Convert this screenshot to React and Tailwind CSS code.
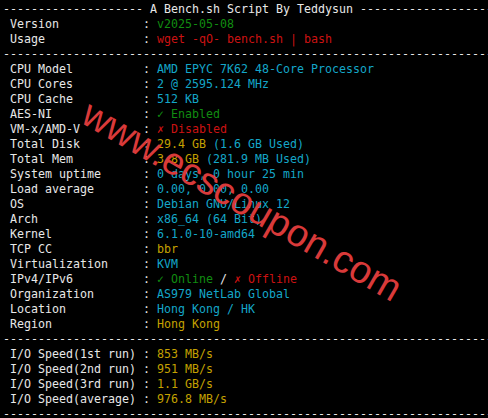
import React from "react";

const C = {
  w: "text-[#e8e8e8]",
  c: "text-[#14a6c8]",
  g: "text-[#118c11]",
  r: "text-[#cc1212]",
  y: "text-[#c4a000]",
};

const DASH = "-".repeat(72);

function Row({ label, parts }) {
  return (
    <div className="h-[15px] whitespace-pre">
      <span className={C.w}>{" " + label.padEnd(19) + ": "}</span>
      {parts.map((p, i) => (
        <span key={i} className={C[p[0]]}>
          {p[1]}
        </span>
      ))}
    </div>
  );
}

function Dash() {
  return <div className={"h-[15px] whitespace-pre " + C.w}>{DASH}</div>;
}

const rows1 = [
  ["CPU Model", [["c", "AMD EPYC 7K62 48-Core Processor"]]],
  ["CPU Cores", [["c", "2 @ 2595.124 MHz"]]],
  ["CPU Cache", [["c", "512 KB"]]],
  ["AES-NI", [["g", "\u2713 Enabled"]]],
  ["VM-x/AMD-V", [["r", "\u2717 Disabled"]]],
  ["Total Disk", [["y", "29.4 GB"], ["c", " (1.6 GB Used)"]]],
  ["Total Mem", [["y", "3.8 GB"], ["c", " (281.9 MB Used)"]]],
  ["System uptime", [["c", "0 days, 0 hour 25 min"]]],
  ["Load average", [["c", "0.00, 0.00, 0.00"]]],
  ["OS", [["c", "Debian GNU/Linux 12"]]],
  ["Arch", [["c", "x86_64 (64 Bit)"]]],
  ["Kernel", [["c", "6.1.0-10-amd64"]]],
  ["TCP CC", [["y", "bbr"]]],
  ["Virtualization", [["c", "KVM"]]],
  ["IPv4/IPv6", [["g", "\u2713 Online"], ["w", " / "], ["r", "\u2717 Offline"]]],
  ["Organization", [["c", "AS979 NetLab Global"]]],
  ["Location", [["c", "Hong Kong / HK"]]],
  ["Region", [["y", "Hong Kong"]]],
];

const rows2 = [
  ["I/O Speed(1st run)", [["y", "853 MB/s"]]],
  ["I/O Speed(2nd run)", [["y", "951 MB/s"]]],
  ["I/O Speed(3rd run)", [["y", "1.1 GB/s"]]],
  ["I/O Speed(average)", [["y", "976.8 MB/s"]]],
];

export default function App() {
  return (
    <div className="relative w-[488px] h-[418px] overflow-hidden bg-black">
      <div
        className="pl-[3px] pt-[2px] text-[11.63px] leading-[15px]"
        style={{ fontFamily: '"DejaVu Sans Mono", monospace' }}
      >
        <div className={"h-[15px] whitespace-pre " + C.w}>
          {"-------------------- A Bench.sh Script By Teddysun ---------------------"}
        </div>
        <Row label="Version" parts={[["g", "v2025-05-08"]]} />
        <Row label="Usage" parts={[["r", "wget -qO- bench.sh | bash"]]} />
        <Dash />
        {rows1.map(([l, p]) => (
          <Row key={l} label={l} parts={p} />
        ))}
        <Dash />
        {rows2.map(([l, p]) => (
          <Row key={l} label={l} parts={p} />
        ))}
        <Dash />
      </div>
      <div className="absolute left-[242px] top-[201px] -translate-x-1/2 -translate-y-1/2 rotate-[30deg] whitespace-nowrap text-[38.5px] leading-none text-[#d93a3a] font-['Liberation_Sans',Arial,sans-serif]">
        www.ecscoupon.com
      </div>
    </div>
  );
}
